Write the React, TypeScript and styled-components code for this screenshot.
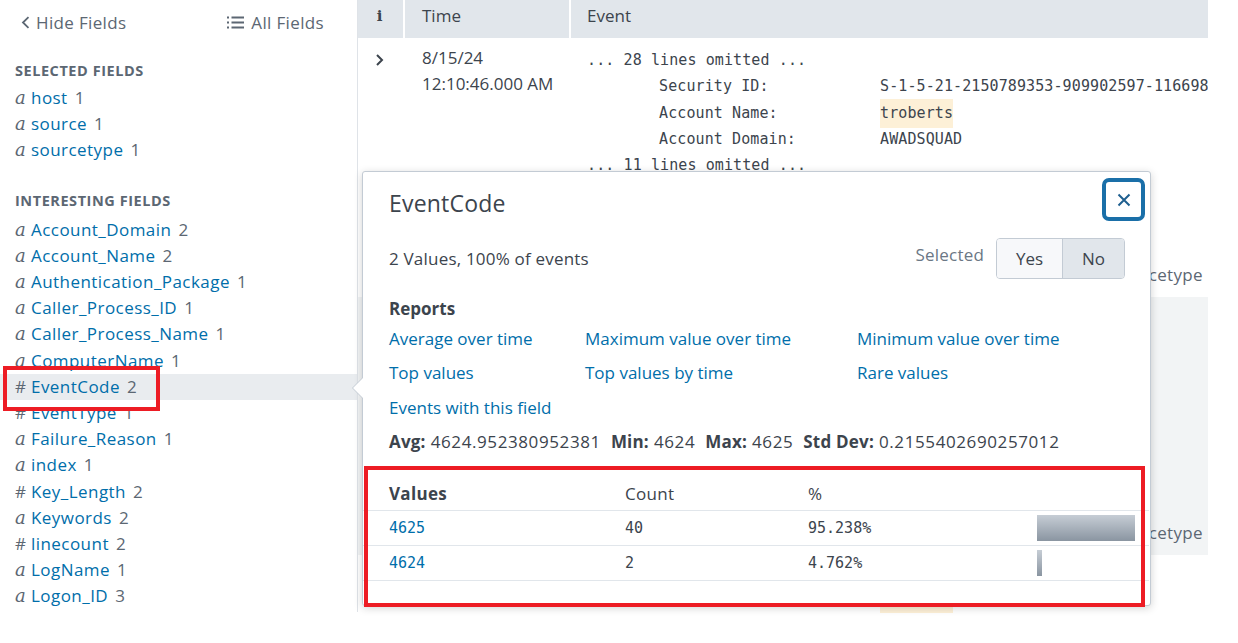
import React from 'react';
import styled, { createGlobalStyle } from 'styled-components';

const Global = createGlobalStyle`
  html, body { margin: 0; padding: 0; background: #fff; }
  body { font-family: "Open Sans", "Liberation Sans", sans-serif; color: #3c444d; }
  * { box-sizing: border-box; }
`;

const SANS = `"Open Sans", "Liberation Sans", sans-serif`;
const MONO = `"DejaVu Sans Mono", "Liberation Mono", monospace`;
const BLUE = '#006eaa';
const GREY = '#5c6773';
const DARK = '#3c444d';

const Page = styled.div`
  position: relative;
  display: flex;
  align-items: flex-start;
  width: 1238px;
  height: 643px;
  overflow: hidden;
  background: #fff;
`;

/* ---------- Sidebar ---------- */
const Sidebar = styled.aside`
  flex: 0 0 358px;
  height: 612px;
  border-right: 1px solid #dfe3e8;
  display: flex;
  flex-direction: column;
`;

const TopBar = styled.div`
  height: 44px;
  display: flex;
  align-items: center;
  justify-content: space-between;
  padding: 0 33px 0 21px;
  font-size: 17px;
  letter-spacing: 0.35px;
  color: ${GREY};
`;

const TopLink = styled.span<{ $gap: number }>`
  display: inline-flex;
  align-items: center;
  gap: ${(p) => p.$gap}px;
`;

const SectionTitle = styled.div<{ $top: number; $after: number }>`
  padding-left: 15px;
  margin-top: ${(p) => p.$top}px;
  margin-bottom: ${(p) => p.$after}px;
  font-size: 14.5px;
  font-weight: 700;
  letter-spacing: 0.55px;
  line-height: 22px;
  color: ${GREY};
  text-transform: uppercase;
`;

const FieldRow = styled.div<{ $active?: boolean }>`
  height: 26.2px;
  display: flex;
  align-items: center;
  padding-left: 15px;
  font-size: 17px;
  line-height: 26px;
  background: ${(p) => (p.$active ? '#e9ecef' : 'transparent')};
`;

const TypeIcon = styled.span<{ $serif: boolean }>`
  width: 16px;
  flex: 0 0 16px;
  color: ${GREY};
  font-family: ${(p) => (p.$serif ? `"DejaVu Serif", "Liberation Serif", serif` : SANS)};
  font-style: ${(p) => (p.$serif ? 'italic' : 'normal')};
  font-size: ${(p) => (p.$serif ? '18px' : '17px')};
`;

const FieldName = styled.span`
  color: ${BLUE};
  letter-spacing: 0.45px;
`;

const FieldCount = styled.span`
  color: ${GREY};
  margin-left: 7px;
`;

/* ---------- Main ---------- */
const Main = styled.main`
  flex: 0 0 850px;
  display: flex;
  flex-direction: column;
`;

const HeaderRow = styled.div`
  display: grid;
  grid-template-columns: 47px 166px 1fr;
  height: 38px;
  background: #e1e6eb;
  font-size: 17px;
  color: ${DARK};
`;

const HeadCell = styled.div<{ $center?: boolean; $pad?: number }>`
  display: flex;
  justify-content: ${(p) => (p.$center ? 'center' : 'flex-start')};
  padding: 4px 0 0 ${(p) => p.$pad ?? 0}px;
  line-height: 24px;
  border-right: 2px solid #fff;
  &:last-child { border-right: none; }
`;

const InfoGlyph = styled.span`
  font-family: "DejaVu Serif", "Liberation Serif", serif;
  font-weight: 700;
  font-size: 15px;
  padding-right: 2px;
`;

const EventRow = styled.div`
  display: grid;
  grid-template-columns: 47px 166px 1fr;
`;

const ExpandCell = styled.div`
  display: flex;
  justify-content: center;
  padding: 16px 4px 0 0;
`;

const TimeCell = styled.div`
  padding: 7px 0 0 17px;
  font-size: 17px;
  line-height: 26px;
  color: ${DARK};
`;

const EventText = styled.div<{ $top: number }>`
  padding: ${(p) => p.$top}px 0 0 16px;
  font-family: ${MONO};
  font-size: 15px;
  line-height: 26.25px;
  letter-spacing: 0.1px;
  color: ${DARK};
  white-space: pre;
  overflow: hidden;
`;

const KVLine = styled.div`
  display: block;
`;

const KVKey = styled.span`
  display: inline-block;
  padding-left: 72px;
  width: 293px;
`;

const Highlight = styled.span`
  background: #fdf0d7;
  padding: 5px 0 6px;
`;

const BgBand = styled.div<{ $h: number; $shaded?: boolean }>`
  height: ${(p) => p.$h}px;
  display: flex;
  justify-content: flex-end;
  align-items: flex-end;
  padding: 0 5px 9px 0;
  background: ${(p) => (p.$shaded ? '#f2f4f5' : 'transparent')};
  font-size: 17px;
  line-height: 26px;
  letter-spacing: 0.35px;
  color: ${GREY};
`;

const BgLines = styled.div`
  display: grid;
  grid-template-columns: 213px 1fr;
`;

/* ---------- Popover ---------- */
const Popover = styled.section`
  position: absolute;
  left: 362px;
  top: 171px;
  width: 789px;
  height: 435px;
  background: #fff;
  border: 1px solid #c3cbd4;
  border-radius: 3px;
  box-shadow: 0 2px 8px rgba(0, 0, 0, 0.18);
  display: flex;
  flex-direction: column;

  &::before {
    content: '';
    position: absolute;
    left: -11px;
    top: 205px;
    border-style: solid;
    border-width: 11px 11px 11px 0;
    border-color: transparent #c3cbd4 transparent transparent;
  }
  &::after {
    content: '';
    position: absolute;
    left: -10px;
    top: 206px;
    border-style: solid;
    border-width: 10px 10px 10px 0;
    border-color: transparent #fff transparent transparent;
  }
`;

const PopHeader = styled.div`
  display: flex;
  justify-content: space-between;
  align-items: flex-start;
  padding: 6px 5px 0 26px;
`;

const Title = styled.h2`
  margin: 10px 0 0;
  font-size: 23px;
  font-weight: 400;
  line-height: 30px;
  letter-spacing: 0.2px;
  color: ${DARK};
`;

const CloseButton = styled.button`
  width: 43px;
  height: 43px;
  display: flex;
  align-items: center;
  justify-content: center;
  padding: 0;
  background: #fff;
  border: 4px solid #1a6fa8;
  border-radius: 7px;
  cursor: pointer;
`;

const SummaryRow = styled.div`
  margin-top: 17px;
  height: 41px;
  display: flex;
  align-items: center;
  justify-content: space-between;
  padding: 0 25px 0 26px;
  font-size: 17px;
  letter-spacing: 0.2px;
`;

const SelectedGroup = styled.div`
  display: flex;
  align-items: center;
  gap: 12px;
`;

const SelectedLabel = styled.span`
  color: #6b7785;
  margin-bottom: 8px;
`;

const Toggle = styled.div`
  display: flex;
  height: 41px;
  border: 1px solid #c3cbd4;
  border-radius: 4px;
  overflow: hidden;
`;

const ToggleBtn = styled.button<{ $on?: boolean; $w: number }>`
  width: ${(p) => p.$w}px;
  border: none;
  border-left: ${(p) => (p.$on ? '1px solid #c3cbd4' : 'none')};
  background: ${(p) => (p.$on ? '#e1e6eb' : '#f7f8fa')};
  font-family: ${SANS};
  font-size: 17px;
  color: ${DARK};
  padding: 0;
`;

const Body = styled.div`
  padding: 0 0 0 26px;
`;

const Heading = styled.div`
  margin-top: 18px;
  font-size: 17px;
  font-weight: 700;
  line-height: 24px;
  color: ${DARK};
`;

const ReportGrid = styled.div`
  margin-top: 6px;
  display: grid;
  grid-template-columns: 196px 272px 1fr;
  row-gap: 10.3px;
  font-size: 17px;
  line-height: 24px;
  letter-spacing: 0;
`;

const ReportLink = styled.a`
  color: ${BLUE};
  text-decoration: none;
  white-space: nowrap;
`;

const Stats = styled.div`
  margin-top: 10px;
  display: flex;
  gap: 10px;
  font-size: 17px;
  line-height: 24px;
  letter-spacing: 0.6px;
  color: ${DARK};
  white-space: nowrap;
`;

const StatLabel = styled.b`
  font-weight: 700;
  letter-spacing: 0.2px;
`;

const ValuesTable = styled.div`
  margin-top: 22.5px;
  width: 786px;
`;

const TRow = styled.div`
  display: grid;
  grid-template-columns: 236px 183px 229px 1fr;
  height: 35px;
  align-items: center;
  border-bottom: 1px solid #e1e6eb;
`;

const TH = styled.div<{ $bold?: boolean }>`
  padding-left: 26px;
  font-size: 17px;
  font-weight: ${(p) => (p.$bold ? 700 : 400)};
  letter-spacing: 0.3px;
  color: ${DARK};
`;

const TD = styled.div<{ $link?: boolean }>`
  padding-left: 26px;
  font-family: ${MONO};
  font-size: 15px;
  color: ${(p) => (p.$link ? BLUE : DARK)};
  display: flex;
  align-items: center;
`;

const Bar = styled.div`
  height: 26px;
  background: linear-gradient(to bottom, #c6cdd5, #8a95a1);
`;

const Annotation = styled.div<{ $x: number; $y: number; $w: number; $h: number }>`
  position: absolute;
  left: ${(p) => p.$x}px;
  top: ${(p) => p.$y}px;
  width: ${(p) => p.$w}px;
  height: ${(p) => p.$h}px;
  border: 4.5px solid #ed1c24;
  pointer-events: none;
`;

type F = [string, string, number];
const selected: F[] = [
  ['a', 'host', 1],
  ['a', 'source', 1],
  ['a', 'sourcetype', 1],
];
const interesting: F[] = [
  ['a', 'Account_Domain', 2],
  ['a', 'Account_Name', 2],
  ['a', 'Authentication_Package', 1],
  ['a', 'Caller_Process_ID', 1],
  ['a', 'Caller_Process_Name', 1],
  ['a', 'ComputerName', 1],
  ['#', 'EventCode', 2],
  ['#', 'EventType', 1],
  ['a', 'Failure_Reason', 1],
  ['a', 'index', 1],
  ['#', 'Key_Length', 2],
  ['a', 'Keywords', 2],
  ['#', 'linecount', 2],
  ['a', 'LogName', 1],
  ['a', 'Logon_ID', 3],
];

const reports = [
  'Average over time',
  'Maximum value over time',
  'Minimum value over time',
  'Top values',
  'Top values by time',
  'Rare values',
  'Events with this field',
];

const values = [
  { v: '4625', c: '40', p: 95.238 },
  { v: '4624', c: '2', p: 4.762 },
];

const Field: React.FC<{ f: F; active?: boolean }> = ({ f, active }) => (
  <FieldRow $active={active}>
    <TypeIcon $serif={f[0] === 'a'}>{f[0]}</TypeIcon>
    <FieldName>{f[1]}</FieldName>
    <FieldCount>{f[2]}</FieldCount>
  </FieldRow>
);

export default function App() {
  return (
    <>
      <Global />
      <Page>
        <Sidebar>
          <TopBar>
            <TopLink $gap={6}>
              <svg width="9" height="13" viewBox="0 0 9 13">
                <path d="M7.5 1.2 L2 6.5 L7.5 11.8" fill="none" stroke={GREY} strokeWidth="1.8" />
              </svg>
              Hide Fields
            </TopLink>
            <TopLink $gap={7}>
              <svg width="17" height="13" viewBox="0 0 17 13">
                <g fill={GREY}>
                  <rect x="0" y="0.5" width="2" height="2" />
                  <rect x="0" y="5.5" width="2" height="2" />
                  <rect x="0" y="10.5" width="2" height="2" />
                  <rect x="4.5" y="0.5" width="12.5" height="2" />
                  <rect x="4.5" y="5.5" width="12.5" height="2" />
                  <rect x="4.5" y="10.5" width="12.5" height="2" />
                </g>
              </svg>
              All Fields
            </TopLink>
          </TopBar>
          <SectionTitle $top={16} $after={3}>Selected Fields</SectionTitle>
          {selected.map((f) => (
            <Field key={f[1]} f={f} />
          ))}
          <SectionTitle $top={26} $after={5}>Interesting Fields</SectionTitle>
          {interesting.map((f) => (
            <Field key={f[1]} f={f} active={f[1] === 'EventCode'} />
          ))}
        </Sidebar>

        <Main>
          <HeaderRow>
            <HeadCell $center>
              <InfoGlyph>i</InfoGlyph>
            </HeadCell>
            <HeadCell $pad={17}>Time</HeadCell>
            <HeadCell $pad={16}>Event</HeadCell>
          </HeaderRow>
          <EventRow>
            <ExpandCell>
              <svg width="9" height="12" viewBox="0 0 9 12">
                <path d="M2 1 L7 6 L2 11" fill="none" stroke={DARK} strokeWidth="2" />
              </svg>
            </ExpandCell>
            <TimeCell>
              <div>8/15/24</div>
              <div>12:10:46.000 AM</div>
            </TimeCell>
            <EventText $top={9}>
              <div>... 28 lines omitted ...</div>
              <KVLine>
                <KVKey>Security ID:</KVKey>
                S-1-5-21-2150789353-909902597-1166982
              </KVLine>
              <KVLine>
                <KVKey>Account Name:</KVKey>
                <Highlight>troberts</Highlight>
              </KVLine>
              <KVLine>
                <KVKey>Account Domain:</KVKey>
                AWADSQUAD
              </KVLine>
              <div>... 11 lines omitted ...</div>
            </EventText>
          </EventRow>
          <BgBand $h={119}>sourcetype</BgBand>
          <BgBand $h={258} $shaded>sourcetype</BgBand>
          <BgLines>
            <div />
            <EventText $top={31}>
              <KVLine>
                <KVKey>Account Name:</KVKey>
                <Highlight>troberts</Highlight>
              </KVLine>
            </EventText>
          </BgLines>
        </Main>

        <Popover>
          <PopHeader>
            <Title>EventCode</Title>
            <CloseButton aria-label="Close">
              <svg width="14" height="14" viewBox="0 0 14 14">
                <path d="M1.5 1.5 L12.5 12.5 M12.5 1.5 L1.5 12.5" stroke="#1f5f8f" strokeWidth="2" fill="none" />
              </svg>
            </CloseButton>
          </PopHeader>
          <SummaryRow>
            <span>2 Values, 100% of events</span>
            <SelectedGroup>
              <SelectedLabel>Selected</SelectedLabel>
              <Toggle>
                <ToggleBtn $w={65}>Yes</ToggleBtn>
                <ToggleBtn $w={62} $on>
                  No
                </ToggleBtn>
              </Toggle>
            </SelectedGroup>
          </SummaryRow>
          <Body>
            <Heading>Reports</Heading>
            <ReportGrid>
              {reports.map((r) => (
                <ReportLink key={r}>{r}</ReportLink>
              ))}
            </ReportGrid>
            <Stats>
              <span>
                <StatLabel>Avg:</StatLabel> 4624.952380952381
              </span>
              <span>
                <StatLabel>Min:</StatLabel> 4624
              </span>
              <span>
                <StatLabel>Max:</StatLabel> 4625
              </span>
              <span>
                <StatLabel>Std Dev:</StatLabel> 0.2155402690257012
              </span>
            </Stats>
          </Body>
          <ValuesTable>
            <TRow>
              <TH $bold>Values</TH>
              <TH>Count</TH>
              <TH>%</TH>
              <div />
            </TRow>
            {values.map((r) => (
              <TRow key={r.v}>
                <TD $link>{r.v}</TD>
                <TD>{r.c}</TD>
                <TD>{r.p.toFixed(3)}%</TD>
                <TD>
                  <Bar style={{ width: `${(r.p / 100) * 103.2}px` }} />
                </TD>
              </TRow>
            ))}
          </ValuesTable>
        </Popover>

        <Annotation $x={3} $y={366} $w={157} $h={45} />
        <Annotation $x={364} $y={466} $w={781} $h={141} />
      </Page>
    </>
  );
}
